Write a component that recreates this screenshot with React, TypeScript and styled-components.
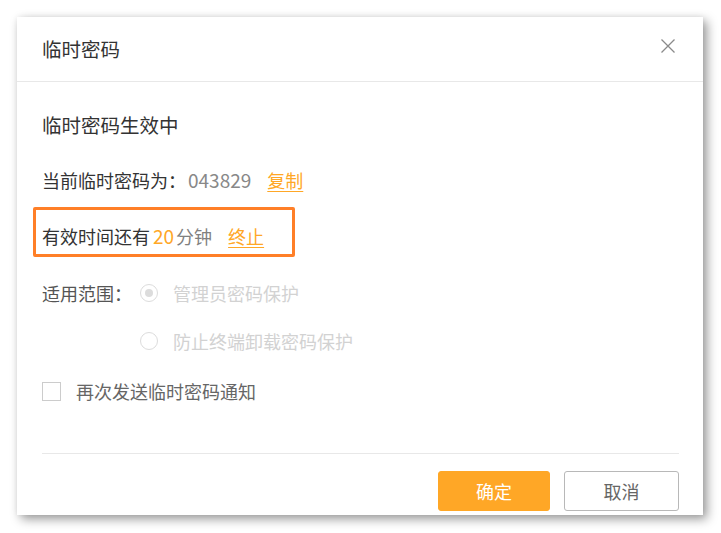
import styled, { createGlobalStyle } from "styled-components";

const GlobalStyle = createGlobalStyle`
  html, body {
    margin: 0;
    padding: 0;
    background: #ffffff;
  }
  body {
    font-family: "Noto Sans CJK SC", "Noto Sans", sans-serif;
    color: #333333;
  }
  * {
    box-sizing: border-box;
  }
`;

const ORANGE = "#ffa726";

export default function App() {
  return (
    <>
      <GlobalStyle />
      <Page>
        <Dialog>
          <Header>
            <Title>临时密码</Title>
            <CloseButton aria-label="关闭">
              <svg width="14" height="14" viewBox="0 0 14 14">
                <path
                  d="M0.5 0.5 L13.5 13.5 M13.5 0.5 L0.5 13.5"
                  stroke="#8a8a8a"
                  strokeWidth="1.3"
                  fill="none"
                />
              </svg>
            </CloseButton>
          </Header>
          <Body>
            <Row $top={31} $size={19.5}>
              临时密码生效中
            </Row>
            <Row $top={31}>
              当前临时密码为：<Digits>043829</Digits>
              <LinkText>复制</LinkText>
            </Row>
            <Row $top={32}>
              <Highlight />
              有效时间还有<Accent>20</Accent>
              <Muted>分钟</Muted>
              <LinkText>终止</LinkText>
            </Row>
            <ScopeGrid>
              <ScopeLabel>适用范围：</ScopeLabel>
              <Option>
                <Radio $checked />
                管理员密码保护
              </Option>
              <span />
              <Option>
                <Radio />
                防止终端卸载密码保护
              </Option>
            </ScopeGrid>
            <CheckRow>
              <CheckBox />
              再次发送临时密码通知
            </CheckRow>
          </Body>
          <Footer>
            <Button $primary>确定</Button>
            <Button>取消</Button>
          </Footer>
        </Dialog>
      </Page>
    </>
  );
}

const Page = styled.div`
  padding: 17px;
`;

const Dialog = styled.div`
  width: 686px;
  height: 498px;
  background: #ffffff;
  display: flex;
  flex-direction: column;
  box-shadow:
    4px 4px 10px rgba(0, 0, 0, 0.4),
    0 0 6px rgba(0, 0, 0, 0.06);
`;

const Header = styled.div`
  height: 65px;
  display: flex;
  align-items: center;
  justify-content: space-between;
  padding: 0 28px 0 25px;
  border-bottom: 1px solid #e8e8e8;
`;

const Title = styled.div`
  font-size: 19.5px;
  color: #333333;
  line-height: 24px;
`;

const CloseButton = styled.button`
  border: none;
  background: transparent;
  padding: 0;
  width: 14px;
  height: 14px;
  margin-top: -7px;
  display: flex;
  cursor: pointer;
`;

const Body = styled.div`
  flex: 1;
  padding: 0 25px;
  display: flex;
  flex-direction: column;
`;

const Row = styled.div<{ $top: number; $size?: number }>`
  position: relative;
  margin-top: ${p => p.$top}px;
  font-size: ${p => p.$size ?? 18}px;
  line-height: 24px;
  color: #333333;
  display: flex;
  align-items: center;
`;

const Muted = styled.span`
  color: #808080;
`;

const Digits = styled.span`
  color: #888888;
  font-size: 19px;
  margin-left: 2px;
`;

const Accent = styled.span`
  color: ${ORANGE};
  font-size: 19px;
  padding: 0 2px 0 3px;
`;

const LinkText = styled.a`
  color: ${ORANGE};
  text-decoration: underline;
  text-underline-offset: 3px;
  margin-left: 16px;
  cursor: pointer;
`;

const Highlight = styled.div`
  position: absolute;
  left: -9px;
  top: -17px;
  width: 262px;
  height: 50px;
  border: 3px solid #ff7f27;
  border-radius: 2px;
  pointer-events: none;
`;

const ScopeGrid = styled.div`
  margin-top: 33px;
  display: grid;
  grid-template-columns: 98px auto;
  row-gap: 24px;
  font-size: 18px;
  line-height: 24px;
  justify-content: start;
`;

const ScopeLabel = styled.span`
  color: #555555;
`;

const Option = styled.span`
  display: flex;
  align-items: center;
  gap: 15px;
  color: #d2d2d2;
`;

const Radio = styled.span<{ $checked?: boolean }>`
  width: 18px;
  height: 18px;
  border-radius: 50%;
  border: 1px solid #dcdcdc;
  display: flex;
  align-items: center;
  justify-content: center;

  &::after {
    content: "";
    width: 8px;
    height: 8px;
    border-radius: 50%;
    background: ${p => (p.$checked ? "#dcdcdc" : "transparent")};
  }
`;

const CheckRow = styled.label`
  margin-top: 26px;
  display: flex;
  align-items: center;
  gap: 15px;
  font-size: 18px;
  line-height: 24px;
  color: #666666;
`;

const CheckBox = styled.span`
  width: 19px;
  height: 19px;
  border: 1px solid #cccccc;
  background: #ffffff;
`;

const Footer = styled.div`
  margin: 0 24px 0 25px;
  border-top: 1px solid #e8e8e8;
  padding: 17px 0 4px;
  display: flex;
  justify-content: flex-end;
  gap: 14px;
`;

const Button = styled.button<{ $primary?: boolean }>`
  width: ${p => (p.$primary ? 112 : 115)}px;
  height: 40px;
  border-radius: 3px;
  font-family: inherit;
  font-size: 18px;
  cursor: pointer;
  border: 1px solid ${p => (p.$primary ? ORANGE : "#b8b8b8")};
  background: ${p => (p.$primary ? ORANGE : "#ffffff")};
  color: ${p => (p.$primary ? "#ffffff" : "#666666")};
`;
